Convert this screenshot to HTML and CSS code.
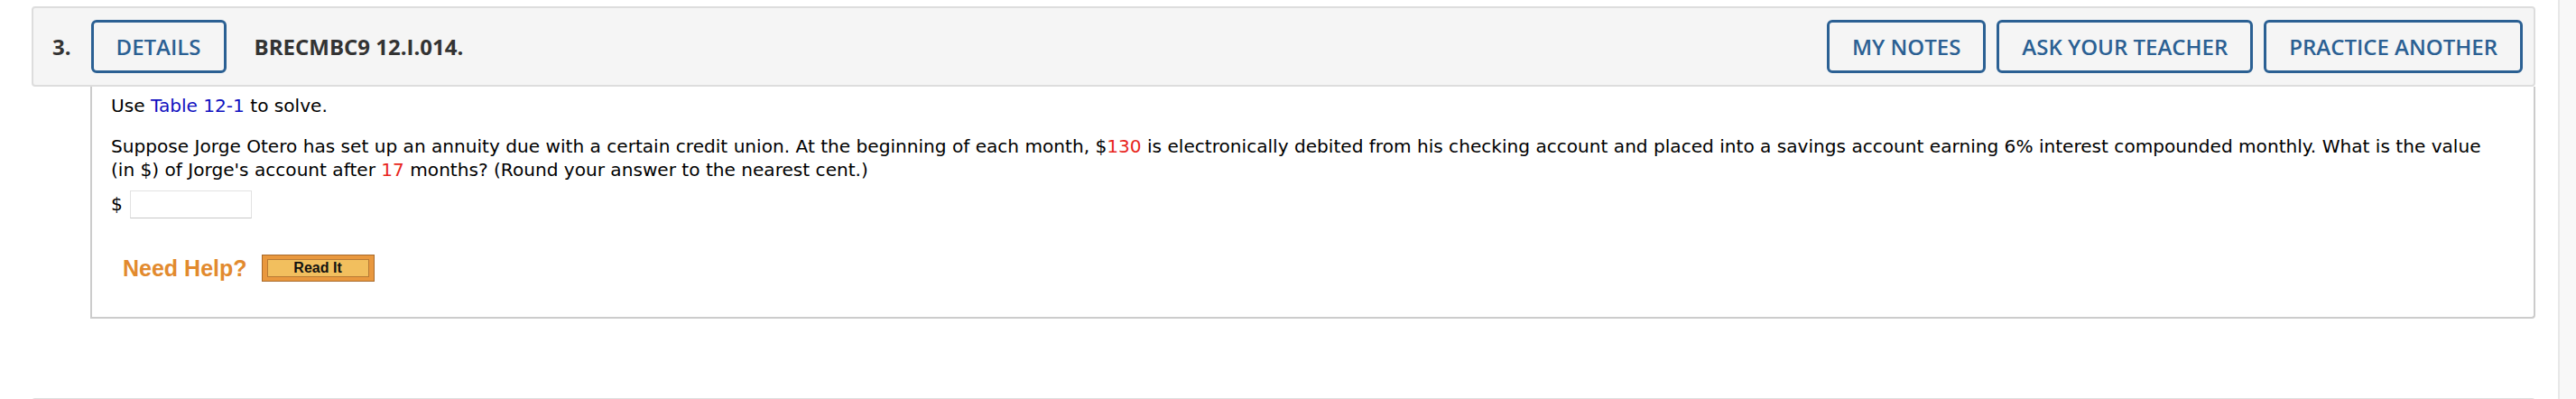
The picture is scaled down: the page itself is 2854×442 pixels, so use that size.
FILE: index.html
```html
<!DOCTYPE html>
<html>
<head>
<meta charset="utf-8">
<link rel="stylesheet" href="styles.css">
</head>
<body>
<div class="page">
  <div class="main">
    <div class="qhead">
      <span class="qnum">3.</span>
      <button class="btn">DETAILS</button>
      <span class="qtitle">BRECMBC9 12.I.014.</span>
      <div class="spacer"></div>
      <div class="actions">
        <button class="btn">MY NOTES</button>
        <button class="btn">ASK YOUR TEACHER</button>
        <button class="btn">PRACTICE ANOTHER</button>
      </div>
    </div>
    <div class="qbody">
      <p class="line">Use <a class="link">Table 12-1</a> to solve.</p>
      <p class="question">Suppose Jorge Otero has set up an annuity due with a certain credit union. At the beginning of each month, $<span class="red">130</span> is electronically debited from his checking account and placed into a savings account earning 6% interest compounded monthly. What is the value (in $) of Jorge's account after <span class="red">17</span> months? (Round your answer to the nearest cent.)</p>
      <div class="answer">
        <span class="dollar">$</span>
        <span class="input"></span>
      </div>
      <div class="help">
        <span class="needhelp">Need Help?</span>
        <span class="readit"><span class="readit-inner">Read It</span></span>
      </div>
    </div>
    <div class="qhead next"></div>
  </div>
  <div class="scrollbar"></div>
</div>
</body>
</html>
```
FILE: styles.css
```css
html, body {
  margin: 0;
  padding: 0;
  background: #ffffff;
  height: 442px;
  overflow: hidden;
}
.page {
  display: flex;
  height: 442px;
  overflow: hidden;
}
.main {
  flex: 1;
  height: 442px;
  overflow: hidden;
  box-sizing: border-box;
  padding: 7px 25px 0 35px;
}
.scrollbar {
  width: 18px;
  border-left: 2px solid #e8e8e8;
  background: #f8f8f8;
}
.qhead {
  box-sizing: border-box;
  height: 89px;
  border: 2px solid #dddddd;
  border-radius: 4px;
  background: #f5f5f5;
  display: flex;
  align-items: center;
  padding: 0 12px 0 21px;
  font-family: "Open Sans", "Liberation Sans", sans-serif;
}
.qhead.next {
  margin-top: 88px;
}
.qnum {
  font-weight: 700;
  font-size: 24px;
  color: #333333;
  margin-right: 22px;
}
.qtitle {
  font-weight: 700;
  font-size: 24px;
  color: #333333;
  margin-left: 31px;
}
.spacer {
  flex: 1;
}
.actions {
  display: flex;
  gap: 12px;
}
.btn {
  box-sizing: border-box;
  height: 59px;
  padding: 0 25px;
  border: 3px solid #2b6093;
  border-radius: 6px;
  background: #f5f5f5;
  color: #2b6093;
  font-family: "Open Sans", "Liberation Sans", sans-serif;
  font-weight: 600;
  font-size: 24px;
  line-height: 1;
}
.qbody {
  box-sizing: border-box;
  height: 257px;
  margin-left: 65px;
  border: 2px solid #cccccc;
  border-top: 0;
  border-bottom-right-radius: 4px;
  padding: 8px 30px 0 21px;
  font-family: "DejaVu Sans", Verdana, sans-serif;
  font-size: 20.1px;
  line-height: 26px;
  color: #000000;
}
.line, .question {
  margin: 0;
}
.question {
  margin-top: 19px;
}
.link {
  color: #1010c0;
}
.red {
  color: #e8261c;
}
.answer {
  display: flex;
  align-items: center;
  margin-top: 9px;
  height: 32px;
}
.dollar {
  margin-right: 8px;
}
.input {
  box-sizing: border-box;
  width: 135px;
  height: 31px;
  border: 1px solid #e2e2e2;
  border-bottom-color: #c8c8c8;
  background: #ffffff;
}
.help {
  display: flex;
  align-items: center;
  margin-top: 40px;
  margin-left: 13px;
}
.needhelp {
  font-family: "Liberation Sans", Arial, sans-serif;
  font-weight: 700;
  font-size: 25px;
  color: #e28a2e;
  margin-right: 16px;
}
.readit {
  box-sizing: border-box;
  width: 125px;
  height: 30px;
  border: 1px solid #a8692a;
  background: #e9983e;
  padding: 4px 5px;
  display: flex;
}
.readit-inner {
  flex: 1;
  box-sizing: border-box;
  border: 1px solid #b87a34;
  background: #f2bf5e;
  font-family: "Liberation Sans", Arial, sans-serif;
  font-weight: 700;
  font-size: 16px;
  color: #111111;
  display: flex;
  align-items: center;
  justify-content: center;
}
```
